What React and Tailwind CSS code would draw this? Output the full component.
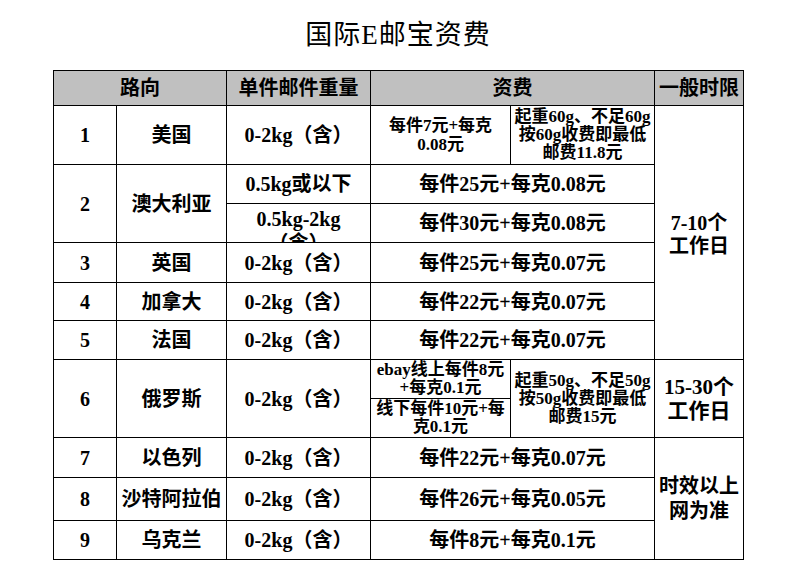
const cell = "border border-black text-center align-middle p-0";

function Lines({ lines, cls = "" }) {
  return (
    <div className={cls}>
      {lines.map((l, i) => (
        <div key={i} className="whitespace-nowrap">
          {l}
        </div>
      ))}
    </div>
  );
}

const simple = [
  { n: "3", name: "英国", fee: "每件25元+每克0.07元", h: "h-[40px]" },
  { n: "4", name: "加拿大", fee: "每件22元+每克0.07元", h: "h-[38px]" },
  { n: "5", name: "法国", fee: "每件22元+每克0.07元", h: "h-[39px]" },
];

const later = [
  { n: "7", name: "以色列", fee: "每件22元+每克0.07元", h: "h-[40px]" },
  { n: "8", name: "沙特阿拉伯", fee: "每件26元+每克0.05元", h: "h-[43px]" },
  { n: "9", name: "乌克兰", fee: "每件8元+每克0.1元", h: "h-[39px]" },
];

export default function App() {
  return (
    <main className="w-[800px] h-[583px] bg-white text-black font-['Liberation_Serif','Noto_Sans_CJK_SC',serif] pl-[53px]">
      <div className="w-[690px] h-[70px] flex items-center justify-center">
        <h1 className="text-[27px] font-normal tracking-[1px]">国际E邮宝资费</h1>
      </div>

      <table className="table-fixed border-collapse w-[690px] font-bold text-[20px] leading-[24px]">
        <colgroup>
          <col className="w-[63px]" />
          <col className="w-[110px]" />
          <col className="w-[144px]" />
          <col className="w-[140px]" />
          <col className="w-[144px]" />
          <col className="w-[89px]" />
        </colgroup>
        <tbody>
          <tr className="h-[35px] bg-[#c0c0c0]">
            <th colSpan={2} className={cell}>路向</th>
            <th className={cell}>单件邮件重量</th>
            <th colSpan={2} className={cell}>资费</th>
            <th className={cell + " whitespace-nowrap"}>一般时限</th>
          </tr>

          <tr className="h-[59px]">
            <td className={cell}>1</td>
            <td className={cell}>美国</td>
            <td className={cell}>0-2kg（含）</td>
            <td className={cell}>
              <Lines lines={["每件7元+每克", "0.08元"]} cls="text-[17px] leading-[19px]" />
            </td>
            <td className={cell}>
              <Lines lines={["起重60g、不足60g", "按60g收费即最低", "邮费11.8元"]} cls="text-[17px] leading-[18px]" />
            </td>
            <td rowSpan={6} className={cell}>
              <Lines lines={["7-10个", "工作日"]} cls="leading-[23px] pt-[4px]" />
            </td>
          </tr>

          <tr className="h-[39px]">
            <td rowSpan={2} className={cell}>2</td>
            <td rowSpan={2} className={cell}>澳大利亚</td>
            <td className={cell}>0.5kg或以下</td>
            <td colSpan={2} className={cell}>每件25元+每克0.08元</td>
          </tr>
          <tr className="h-[39px]">
            <td className={cell}>
              <div className="h-[38px] overflow-hidden pt-[3px] leading-[24px]">
                <div>0.5kg-2kg</div>
                <div>（含）</div>
              </div>
            </td>
            <td colSpan={2} className={cell}>每件30元+每克0.08元</td>
          </tr>

          {simple.map((r) => (
            <tr key={r.n} className={r.h}>
              <td className={cell}>{r.n}</td>
              <td className={cell}>{r.name}</td>
              <td className={cell}>0-2kg（含）</td>
              <td colSpan={2} className={cell}>{r.fee}</td>
            </tr>
          ))}

          <tr className="h-[39px]">
            <td rowSpan={2} className={cell}>6</td>
            <td rowSpan={2} className={cell}>俄罗斯</td>
            <td rowSpan={2} className={cell}>0-2kg（含）</td>
            <td className={cell}>
              <Lines lines={["ebay线上每件8元", "+每克0.1元"]} cls="text-[17px] leading-[18px]" />
            </td>
            <td rowSpan={2} className={cell}>
              <Lines lines={["起重50g、不足50g", "按50g收费即最低", "邮费15元"]} cls="text-[17px] leading-[18px]" />
            </td>
            <td rowSpan={2} className={cell}>
              <Lines lines={["15-30个", "工作日"]} cls="text-[21px] leading-[24px]" />
            </td>
          </tr>
          <tr className="h-[39px]">
            <td className={cell}>
              <div className="h-[38px] overflow-hidden pt-[1px]">
                <Lines lines={["线下每件10元+每", "克0.1元"]} cls="text-[17px] leading-[18px]" />
              </div>
            </td>
          </tr>

          {later.map((r, i) => (
            <tr key={r.n} className={r.h}>
              <td className={cell}>{r.n}</td>
              <td className={cell + " whitespace-nowrap"}>{r.name}</td>
              <td className={cell}>0-2kg（含）</td>
              <td colSpan={2} className={cell}>{r.fee}</td>
              {i === 0 && (
                <td rowSpan={3} className={cell}>
                  <Lines lines={["时效以上", "网为准"]} cls="leading-[25px]" />
                </td>
              )}
            </tr>
          ))}
        </tbody>
      </table>
    </main>
  );
}
